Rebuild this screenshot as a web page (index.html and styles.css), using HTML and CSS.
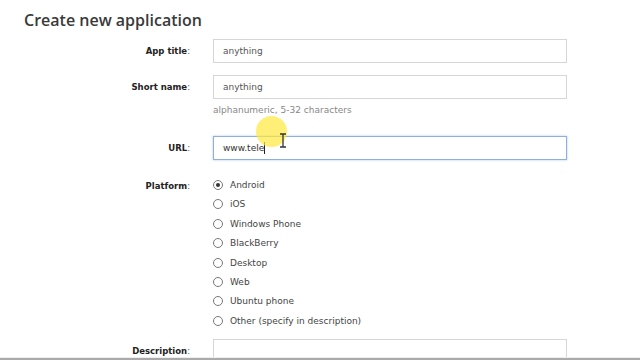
FILE: index.html
```html
<!DOCTYPE html>
<html lang="en">
<head>
    <meta charset="UTF-8">
    <meta name="viewport" content="width=device-width, initial-scale=1.0">
    <title>Create new application</title>
    <link rel="stylesheet" href="styles.css">
</head>
<body>
    <div class="page">
        <h1 class="page-title">Create new application</h1>
        <form class="app-form">
            <!-- text fields -->
            <div class="form-row">
                <span class="field-label"><b>App title</b>:</span>
                <div class="field-input">anything</div>
            </div>
            <div class="form-row">
                <span class="field-label"><b>Short name</b>:</span>
                <div class="field-input">anything</div>
            </div>
            <div class="form-row hint-row">
                <span></span>
                <div class="field-hint">alphanumeric, 5-32 characters</div>
            </div>
            <div class="form-row url-row">
                <span class="field-label"><b>URL</b>:</span>
                <div class="field-input is-focused">www.tele<span class="caret"></span></div>
            </div>

            <!-- platform list -->
            <div class="form-row platform-row">
                <span class="field-label"><b>Platform</b>:</span>
                <div class="radio-list">
                    <div class="radio-item"><span class="radio checked"></span>Android</div>
                    <div class="radio-item"><span class="radio"></span>iOS</div>
                    <div class="radio-item"><span class="radio"></span>Windows Phone</div>
                    <div class="radio-item"><span class="radio"></span>BlackBerry</div>
                    <div class="radio-item"><span class="radio"></span>Desktop</div>
                    <div class="radio-item"><span class="radio"></span>Web</div>
                    <div class="radio-item"><span class="radio"></span>Ubuntu phone</div>
                    <div class="radio-item"><span class="radio"></span>Other (specify in description)</div>
                </div>
            </div>

            <div class="form-row desc-row">
                <span class="field-label"><b>Description</b>:</span>
                <div class="field-textarea"></div>
            </div>
        </form>
    </div>

    <!-- mouse highlight from the recording -->
    <div class="cursor-glow"></div>
    <svg class="cursor-ibeam" width="8" height="15" viewBox="0 0 8 15">
        <path d="M1 1h6M4 1v13M1 14h6" stroke="#333" stroke-width="1.3" fill="none"/>
    </svg>
    <div class="bottom-bar"></div>
</body>
</html>
```

FILE: styles.css
```css
body {
    font-family: "DejaVu Sans", Arial, sans-serif;
    background-color: #fff;
    color: #333;
    margin: 0;
    padding: 0;
    width: 640px;
    height: 360px;
    overflow: hidden;
    position: relative;
}

.page {
    padding: 10px 0 0 24px;
}

.page-title {
    font-family: "Open Sans", sans-serif;
    font-size: 16px;
    font-weight: 600;
    color: #3a3a3a;
    margin: 0;
    line-height: 20px;
}

.app-form {
    display: flex;
    flex-direction: column;
    margin-top: 9px;
}

.form-row {
    display: grid;
    grid-template-columns: 166px 354px;
    column-gap: 23px;
    align-items: center;
    margin-bottom: 12px;
}

.field-label {
    text-align: right;
    font-size: 8.5px;
    color: #555;
}

.field-label b {
    color: #222;
}

.field-input {
    box-sizing: border-box;
    height: 24px;
    border: 1px solid #d6d6d6;
    padding: 0 9px;
    font-size: 9px;
    line-height: 22px;
    color: #555;
    background-color: #fff;
}

.field-input.is-focused {
    border-color: #8fb0dc;
    box-shadow: 0 0 2px rgba(100, 140, 210, 0.5);
    color: #333;
}

.caret {
    display: inline-block;
    width: 1px;
    height: 12px;
    background-color: #222;
    vertical-align: -3px;
}

.hint-row {
    margin-top: -7px;
    margin-bottom: 20px;
}

.field-hint {
    font-size: 9px;
    color: #888;
    line-height: 12px;
}

.platform-row {
    align-items: start;
    margin-top: 4px;
}

.platform-row .field-label {
    line-height: 18px;
    margin-top: 1px;
}

.radio-list {
    display: flex;
    flex-direction: column;
    gap: 1.4px;
}

.radio-item {
    display: flex;
    align-items: center;
    gap: 7px;
    height: 18px;
    font-size: 9px;
    color: #444;
}

.radio {
    box-sizing: border-box;
    width: 10px;
    height: 10px;
    border: 1px solid #777;
    border-radius: 50%;
    display: flex;
    align-items: center;
    justify-content: center;
}

.radio.checked::after {
    content: "";
    width: 4px;
    height: 4px;
    border-radius: 50%;
    background-color: #333;
}

.desc-row {
    align-items: start;
    margin-top: -3px;
}

.desc-row .field-label {
    line-height: 24px;
}

.field-textarea {
    height: 40px;
    border: 1px solid #d6d6d6;
}

.cursor-glow {
    position: absolute;
    left: 256px;
    top: 116px;
    width: 31px;
    height: 31px;
    border-radius: 50%;
    background-color: rgba(255, 232, 60, 0.7);
}

.cursor-ibeam {
    position: absolute;
    left: 279px;
    top: 133px;
}

.bottom-bar {
    position: absolute;
    left: 0;
    right: 0;
    bottom: 0;
    height: 2px;
    background-color: #aaa;
    border-top: 1px solid #eee;
}
```
